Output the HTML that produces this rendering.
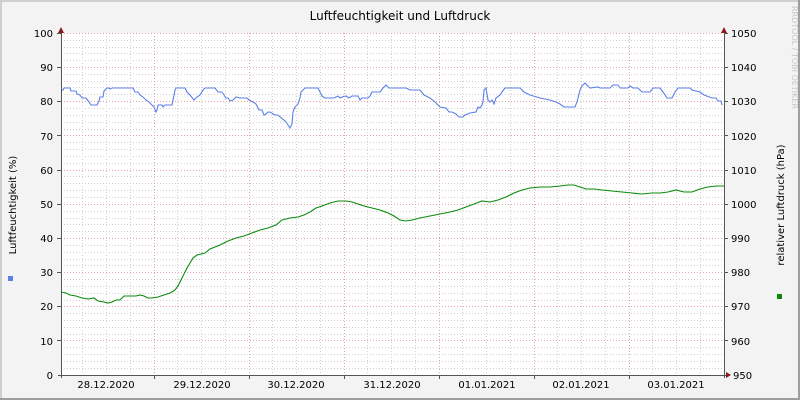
<!DOCTYPE html>
<html><head><meta charset="utf-8"><style>
html,body{margin:0;padding:0;background:#f3f3f3}
svg{display:block}
text{font-family:"DejaVu Sans","Liberation Sans",sans-serif;font-size:10px;fill:#000}
</style></head><body>
<svg width="800" height="400" viewBox="0 0 800 400" xmlns="http://www.w3.org/2000/svg">
<rect x="0" y="0" width="800" height="400" fill="#f3f3f3"/>
<rect x="0" y="0" width="800" height="2" fill="#cfcfcf"/>
<rect x="0" y="0" width="2" height="400" fill="#cfcfcf"/>
<rect x="798" y="0" width="2" height="400" fill="#9e9e9e"/>
<rect x="0" y="398" width="800" height="2" fill="#9e9e9e"/>
<rect x="61" y="33" width="663" height="342" fill="#fff"/>
<g id="grid" stroke-width="1" shape-rendering="crispEdges">
<g stroke="#cfcfcf" stroke-dasharray="1,2">
<path d="M61 368.5H724M61 361.5H724M61 354.5H724M61 347.5H724M61 334.5H724M61 327.5H724M61 320.5H724M61 313.5H724M61 300.5H724M61 293.5H724M61 286.5H724M61 279.5H724M61 265.5H724M61 259.5H724M61 252.5H724M61 245.5H724M61 231.5H724M61 224.5H724M61 218.5H724M61 211.5H724M61 197.5H724M61 190.5H724M61 183.5H724M61 176.5H724M61 163.5H724M61 156.5H724M61 149.5H724M61 142.5H724M61 129.5H724M61 122.5H724M61 115.5H724M61 108.5H724M61 94.5H724M61 87.5H724M61 81.5H724M61 74.5H724M61 60.5H724M61 53.5H724M61 47.5H724M61 40.5H724"/>
<path d="M82.5 33V375M106.5 33V375M130.5 33V375M177.5 33V375M201.5 33V375M225.5 33V375M272.5 33V375M296.5 33V375M320.5 33V375M367.5 33V375M391.5 33V375M415.5 33V375M462.5 33V375M486.5 33V375M510.5 33V375M557.5 33V375M581.5 33V375M605.5 33V375M652.5 33V375M676.5 33V375M700.5 33V375"/>
</g>
<g stroke="#e6a3a3" stroke-dasharray="1,2">
<path d="M61 340.5H724M61 306.5H724M61 272.5H724M61 238.5H724M61 204.5H724M61 170.5H724M61 135.5H724M61 101.5H724M61 67.5H724M61 33.5H724"/>
<path d="M154.5 33V375M249.5 33V375M344.5 33V375M439.5 33V375M534.5 33V375M629.5 33V375"/>
</g>
</g>
<polyline fill="none" stroke="#5b7fe8" stroke-width="1.1" points="61,90 63,90 64,88 66,88 67,88 70,88 71,91 76,91 77,94 80,95 82,98 86,98 89,102 91,105 97,105 99,101 100,97 103,97 104,91 107,88 109,88 110,89 112,88 130,88 133,88 135,92 138,92 140,95 143,97 146,100 149,102 152,105 154,107 156,112 157,110 158,105 162,105 163,107 165,105 172,105 173,100 175,90 176,88 185,88 187,92 190,95 194,100 197,97 200,95 203,90 205,88 215,88 218,92 222,92 224,95 226,98 228,98 230,101 233,100 236,97 240,98 247,98 249,100 253,102 256,104 259,110 262,110 264,115 266,114 268,112 270,112 275,115 278,115 280,117 284,120 286,122 288,125 290,128 292,124 293,112 295,107 298,104 300,98 301,92 303,90 305,88 318,88 320,92 322,96 325,98 328,98 334,98 338,96 340,98 342,97 346,96 349,98 352,96 358,96 360,100 362,98 368,98 370,96 372,92 380,92 383,88 386,85 389,88 406,88 410,90 420,90 424,95 430,98 435,102 440,107 446,108 449,112 452,112 456,114 459,117 463,117 465,115 470,113 476,112 478,107 480,108 482,105 483,102 484,90 486,88 488,100 490,102 492,100 494,104 496,98 500,95 502,92 505,88 520,88 524,92 530,95 540,98 550,100 556,102 560,104 564,107 575,107 577,102 580,90 582,86 585,83 590,88 598,87 600,88 610,88 613,85 618,85 620,88 628,88 630,86 633,88 638,88 642,92 650,92 653,88 660,88 663,92 667,98 672,98 675,92 678,88 690,88 692,90 700,92 704,95 712,98 716,98 718,101 721,101 722,105"/>
<polyline fill="none" stroke="#0b8a0b" stroke-width="1.1" points="61,292 66,293 70,295 76,296 82,298 88,299 94,298 98,301 104,302 108,303 112,302 116,300 120,300 124,296 128,296 132,296 136,296 140,295 144,296 148,298 152,298 158,297 164,295 170,293 175,290 178,286 181,280 184,274 187,268 190,263 193,258 197,255 201,254 205,253 210,249 215,247 220,245 228,241 236,238 244,236 252,233 260,230 268,228 276,225 282,220 290,218 298,217 304,215 310,212 316,208 322,206 330,203 338,201 346,201 352,202 358,204 364,206 372,208 380,210 388,213 394,216 400,220 406,221 412,220 420,218 430,216 440,214 450,212 458,210 466,207 474,204 482,201 490,202 498,200 506,197 514,193 522,190 530,188 540,187 550,187 560,186 568,185 574,185 580,187 586,189 594,189 602,190 612,191 622,192 632,193 642,194 652,193 660,193 668,192 676,190 684,192 692,192 700,189 708,187 716,186 724,186"/>
<g stroke="#555" stroke-width="1" shape-rendering="crispEdges">
<path d="M61.5 30V378M724.5 30V378M58 375.5H727"/>
<path d="M57 340.5H61M57 306.5H61M57 272.5H61M57 238.5H61M57 204.5H61M57 170.5H61M57 135.5H61M57 101.5H61M57 67.5H61M57 33.5H61"/>
<path d="M724 340.5H728M724 306.5H728M724 272.5H728M724 238.5H728M724 204.5H728M724 170.5H728M724 135.5H728M724 101.5H728M724 67.5H728M724 33.5H728"/>
<path d="M154.5 375V379M249.5 375V379M344.5 375V379M439.5 375V379M534.5 375V379M629.5 375V379"/>
</g>
<polygon points="58,33 64,33 61,27" fill="#8b1a1a"/>
<polygon points="721,33 727,33 724,27" fill="#8b1a1a"/>
<polygon points="726,372 726,378 731,375" fill="#8b1a1a"/>
<g text-anchor="end">
<text x="53" y="379">0</text><text x="53" y="345">10</text><text x="53" y="310">20</text><text x="53" y="276">30</text><text x="53" y="242">40</text><text x="53" y="208">50</text><text x="53" y="174">60</text><text x="53" y="140">70</text><text x="53" y="105">80</text><text x="53" y="71">90</text><text x="53" y="37">100</text>
</g>
<g>
<text x="733" y="379">950</text><text x="731" y="345">960</text><text x="731" y="310">970</text><text x="731" y="276">980</text><text x="731" y="242">990</text><text x="731" y="208">1000</text><text x="731" y="174">1010</text><text x="731" y="140">1020</text><text x="731" y="105">1030</text><text x="731" y="71">1040</text><text x="731" y="37">1050</text>
</g>
<g text-anchor="middle">
<text x="106" y="388">28.12.2020</text><text x="202" y="388">29.12.2020</text><text x="296" y="388">30.12.2020</text><text x="392" y="388">31.12.2020</text><text x="487" y="388">01.01.2021</text><text x="581" y="388">02.01.2021</text><text x="676" y="388">03.01.2021</text>
</g>
<text x="400" y="20" text-anchor="middle" style="font-size:12px">Luftfeuchtigkeit und Luftdruck</text>
<text transform="translate(16,205) rotate(-90)" text-anchor="middle">Luftfeuchtigkeit (%)</text>
<text transform="translate(784,205) rotate(-90)" text-anchor="middle">relativer Luftdruck (hPa)</text>
<text transform="translate(792,6) rotate(90)" style="font-size:8px;fill:#c8c8c8">RRDTOOL / TOBI OETIKER</text>
<rect x="8" y="276" width="5" height="5" fill="#5b7fe8"/>
<rect x="777" y="294" width="5" height="5" fill="#0b8a0b"/>
</svg>
</body></html>
